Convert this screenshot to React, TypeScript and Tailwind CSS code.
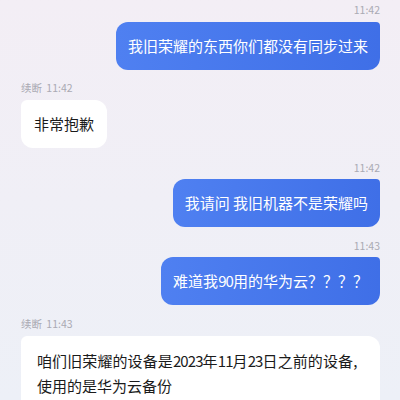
import React from 'react';

const font = { fontFamily: '"Noto Sans CJK SC", "Noto Sans", sans-serif' };

function Time({ children, className = '' }: { children: React.ReactNode; className?: string }) {
  return (
    <div className={`text-right text-[10.5px] leading-[12px] text-[#aaaab3] ${className}`}>{children}</div>
  );
}

function Sent({ children, className = '' }: { children: React.ReactNode; className?: string }) {
  return (
    <div className={`flex justify-end ${className}`}>
      <div className="rounded-[12px] rounded-tr-[4px] bg-linear-to-r from-[#4f80f1] to-[#3f6fe7] px-[12px] py-[12px] text-[15px] leading-[24px] text-white">
        {children}
      </div>
    </div>
  );
}

function Label({ time, className = '' }: { time: string; className?: string }) {
  return (
    <div className={`text-[10.5px] leading-[12px] text-[#aaaab3] ${className}`}>
      续断 <span className="ml-[2px]">{time}</span>
    </div>
  );
}

// digits in the reference are narrower than Noto's
const Num = ({ children }: { children: React.ReactNode }) => (
  <span className="tracking-[-0.9px]">{children}</span>
);

export default function App() {
  return (
    <div
      style={font}
      className="h-[400px] w-[400px] overflow-hidden bg-linear-to-b from-[#f3eef5] via-[#f0eff6] to-[#edf0f7] px-[20px] pt-[4px]"
    >
      <Time>11:42</Time>
      <Sent className="mt-[6px]">我旧荣耀的东西你们都没有同步过来</Sent>

      <Label time="11:42" className="mt-[12px] pl-[1px]" />
      <div className="mt-[6px] flex">
        <div className="ml-[1px] rounded-[12px] rounded-tl-[6px] bg-white px-[13px] py-[12px] text-[15px] leading-[24px] text-[#1b1b1b]">
          非常抱歉
        </div>
      </div>

      <Time className="mt-[14px]">11:42</Time>
      <Sent className="mt-[5px]">我请问 我旧机器不是荣耀吗</Sent>

      <Time className="mt-[13px]">11:43</Time>
      <Sent className="mt-[5px]">
        难道我<Num>90</Num>用的华为云？？？？
      </Sent>

      <Label time="11:43" className="mt-[13px] pl-[1px]" />
      <div className="ml-[1px] mt-[6px] rounded-[12px] rounded-tl-[6px] bg-white px-[16px] pt-[12px] pb-[14px] text-[15px] leading-[25px] text-[#1b1b1b]">
        <div className="whitespace-nowrap tracking-[0.1px]">
          咱们旧荣耀的设备是<Num>2023</Num>年<Num>11</Num>月<Num>23</Num>日之前的设备,
        </div>
        <div>使用的是华为云备份</div>
      </div>
    </div>
  );
}
